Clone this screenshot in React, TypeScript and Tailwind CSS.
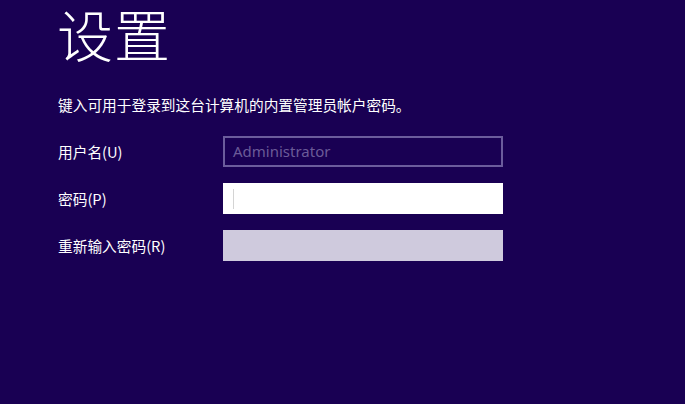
const fields = [
  { label: "用户名(U)", kind: "user" },
  { label: "密码(P)", kind: "password" },
  { label: "重新输入密码(R)", kind: "confirm" },
];

const font = "font-['Noto_Sans_CJK_SC','Noto_Sans',sans-serif]";

export default function App() {
  return (
    <div className={`w-[685px] h-[404px] bg-[#190053] text-white ${font} overflow-hidden`}>
      <div className="pl-[57px] pt-[1px]">
        <h1 className="text-[56px] font-light leading-[64px] tracking-[1px]">设置</h1>
        <p className="mt-[30px] pl-[1px] text-[14.7px] leading-[20px]">
          键入可用于登录到这台计算机的内置管理员帐户密码。
        </p>
        <div className="mt-[21px] pl-[1px] grid grid-cols-[165px_280px] gap-y-[16px] items-center">
          {fields.map((f) => (
            <div key={f.kind} className="contents">
              <span className="text-[14.7px] leading-[20px]">{f.label}</span>
              {f.kind === "user" && (
                <div className="h-[31px] border-2 border-[#6b5c9c] bg-[#190053] flex items-center pl-[8px] text-[15px] text-[#6b5b98] font-['Noto_Sans',sans-serif]">
                  Administrator
                </div>
              )}
              {f.kind === "password" && (
                <div className="h-[31px] bg-white flex items-center pl-[10px]">
                  <div className="w-px h-[20px] bg-[#d4d4d4]" />
                </div>
              )}
              {f.kind === "confirm" && <div className="h-[31px] bg-[#cfcadd]" />}
            </div>
          ))}
        </div>
      </div>
    </div>
  );
}
